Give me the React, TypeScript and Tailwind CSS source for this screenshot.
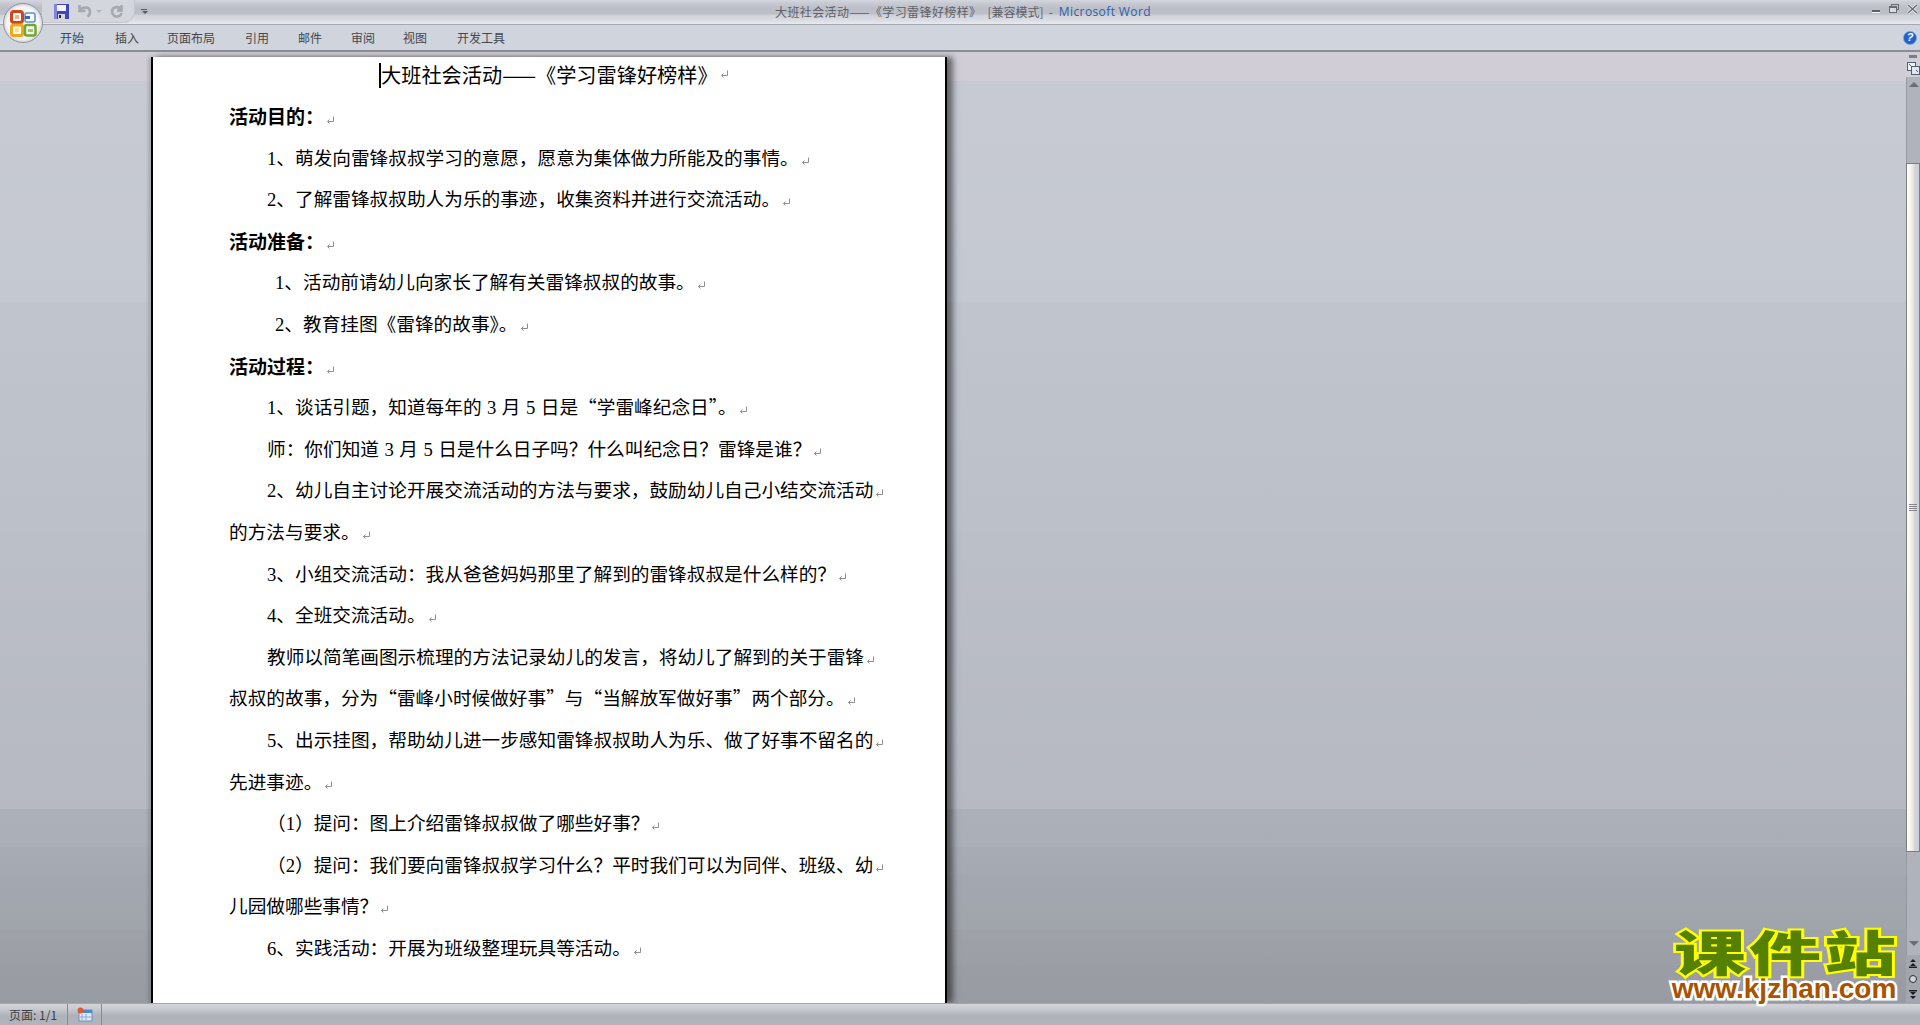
import React from "react";

const tabs = [
  { label: "开始", width: "w-[55px]" },
  { label: "插入", width: "w-[52px]" },
  { label: "页面布局", width: "w-[78px]" },
  { label: "引用", width: "w-[53px]" },
  { label: "邮件", width: "w-[53px]" },
  { label: "审阅", width: "w-[52px]" },
  { label: "视图", width: "w-[54px]" },
  { label: "开发工具", width: "w-[60px]" },
];

// h = 小标题, i = 首行缩进, j = 多缩进一点, c = 续行
const lines: [string, string][] = [
  ["h", "活动目的："],
  ["i", "1、萌发向雷锋叔叔学习的意愿，愿意为集体做力所能及的事情。"],
  ["i", "2、了解雷锋叔叔助人为乐的事迹，收集资料并进行交流活动。"],
  ["h", "活动准备："],
  ["j", "1、活动前请幼儿向家长了解有关雷锋叔叔的故事。"],
  ["j", "2、教育挂图《雷锋的故事》。"],
  ["h", "活动过程："],
  ["i", "1、谈话引题，知道每年的 3 月 5 日是“学雷峰纪念日”。"],
  ["i", "师：你们知道 3 月 5 日是什么日子吗？什么叫纪念日？雷锋是谁？"],
  ["i", "2、幼儿自主讨论开展交流活动的方法与要求，鼓励幼儿自己小结交流活动"],
  ["c", "的方法与要求。"],
  ["i", "3、小组交流活动：我从爸爸妈妈那里了解到的雷锋叔叔是什么样的？"],
  ["i", "4、全班交流活动。"],
  ["i", "教师以简笔画图示梳理的方法记录幼儿的发言，将幼儿了解到的关于雷锋"],
  ["c", "叔叔的故事，分为“雷峰小时候做好事”与“当解放军做好事”两个部分。"],
  ["i", "5、出示挂图，帮助幼儿进一步感知雷锋叔叔助人为乐、做了好事不留名的"],
  ["c", "先进事迹。"],
  ["i", "（1）提问：图上介绍雷锋叔叔做了哪些好事？"],
  ["i", "（2）提问：我们要向雷锋叔叔学习什么？平时我们可以为同伴、班级、幼"],
  ["c", "儿园做哪些事情？"],
  ["i", "6、实践活动：开展为班级整理玩具等活动。"],
];

function ReturnMark() {
  return (
    <svg width="9" height="9" viewBox="0 0 9 9" className="ml-[2px] inline-block align-[-1px]">
      <path d="M7.5 0.5V5.5H1.5M3.5 3.5L1.5 5.5L3.5 7.5" fill="none" stroke="#8f8f8f" strokeWidth="1" />
    </svg>
  );
}

function Line({ kind, text }: { kind: string; text: string }) {
  const indent = kind === "i" ? "pl-[38px]" : kind === "j" ? "pl-[46px]" : "";
  const type = kind === "h" ? "text-[19px] font-bold leading-[41.6px]" : "text-[18.67px] leading-[40px]";
  return (
    <p className={`h-[41.6px] whitespace-nowrap text-black [word-spacing:1.3px] ${indent} ${type}`}>
      {text.split(/(\d)/).map((part, i) =>
        /\d/.test(part) ? (
          <span key={i} className="font-['Liberation_Serif',serif]">
            {part}
          </span>
        ) : (
          part
        ),
      )}
      <ReturnMark />
    </p>
  );
}

function OfficeButton() {
  return (
    <div className="absolute left-[3px] top-[3px] z-10 flex h-[40px] w-[40px] items-center justify-center rounded-full border border-[#8f939b] bg-[radial-gradient(circle,#ffffff_0,#f6f6f4_58%,#d4d6db_72%,#a9adb5_100%)]">
      <svg width="27" height="27" viewBox="0 0 27 27">
        <rect x="1.5" y="1.5" width="11" height="11" rx="2.5" fill="none" stroke="#d0431c" strokeWidth="3" />
        <rect x="5" y="5" width="4" height="4" fill="#f3b080" />
        <rect x="15" y="3" width="10" height="9" rx="1.5" fill="none" stroke="#5b93d0" strokeWidth="1.6" />
        <rect x="15" y="6" width="5" height="3" fill="#2f6bb0" />
        <rect x="1.5" y="15" width="11" height="10.5" rx="2" fill="none" stroke="#f0a818" strokeWidth="3" />
        <rect x="5" y="18" width="4" height="4" fill="#fbe08a" />
        <rect x="15" y="15" width="10.5" height="10.5" rx="2" fill="none" stroke="#6fa82c" strokeWidth="2.5" />
        <rect x="18" y="19" width="5" height="3" fill="#9cc860" />
      </svg>
    </div>
  );
}

function QuickAccess() {
  return (
    <div className="flex h-[23px] w-[93px] items-center rounded-br-[12px] border-b border-r border-[#c4c7ce] bg-[#d3d6dd] pl-[12px]">
      <svg width="15" height="15" viewBox="0 0 15 15">
        <rect width="15" height="15" fill="#3f46b8" />
        <rect x="0" y="0" width="3" height="15" fill="#7f86e0" />
        <rect x="3" y="1" width="9" height="6" fill="#f4f4f8" />
        <rect x="4" y="10" width="7" height="5" fill="#d8d8dc" />
        <rect x="5" y="11" width="2" height="3" fill="#22253a" />
      </svg>
      <svg width="16" height="16" viewBox="0 0 16 16" className="ml-[8px]">
        <path d="M2.5 2V8H8.5M2.5 8C5 3.5 12.5 3 13 8.5C13.2 11 12 12.5 10.5 13.5" fill="none" stroke="#a5a9b1" strokeWidth="2.6" />
      </svg>
      <span className="ml-[3px] h-0 w-0 border-x-[3px] border-t-[3px] border-x-transparent border-t-[#b0b3ba]" />
      <svg width="16" height="16" viewBox="0 0 16 16" className="ml-[7px]">
        <path d="M12.5 2V7.5H8M12.5 7C9.5 2.5 3 3.5 3 8.5C3 12 6 14 8.5 13.5C10.5 13.2 12 12 12.5 10" fill="none" stroke="#a5a9b1" strokeWidth="2.6" />
      </svg>
    </div>
  );
}

function WindowControls() {
  return (
    <div className="flex items-start pt-[4px]">
      <svg width="8" height="4" viewBox="0 0 8 4" className="mt-[6px]">
        <rect width="8" height="2" fill="#5f6168" />
        <rect y="2" width="8" height="1" fill="#f4f5f8" />
      </svg>
      <svg width="10" height="9" viewBox="0 0 10 9" className="ml-[9px]">
        <rect x="2.5" y="0.5" width="7" height="5" fill="none" stroke="#696b72" />
        <rect x="0.5" y="2.5" width="7" height="6" fill="#d8dae0" stroke="#696b72" />
        <rect x="1" y="3" width="6" height="1" fill="#696b72" />
      </svg>
      <svg width="11" height="10" viewBox="0 0 11 10" className="ml-[8px] mr-[2px]">
        <path d="M1 1L10 9M10 1L1 9" fill="none" stroke="#f2f3f6" strokeWidth="3" />
        <path d="M1 1L10 9M10 1L1 9" fill="none" stroke="#6b6d74" strokeWidth="1.6" />
      </svg>
    </div>
  );
}

function HelpIcon() {
  return (
    <div className="flex h-[14px] w-[14px] items-center justify-center rounded-full border border-[#6f9fe8] bg-[radial-gradient(circle,#2f6fe0_0,#174fb8_100%)] font-['Liberation_Sans',sans-serif] text-[11px] font-bold italic leading-none text-white">
      ?
    </div>
  );
}

function ScrollBar() {
  return (
    <div className="flex w-[14px] shrink-0 flex-col items-center bg-[#b0b3bb]">
      <div className="flex h-[8px] w-full items-center justify-center bg-[#d0cdd6]">
        <div className="h-[3px] w-[8px] bg-[#7c7e85]" />
      </div>
      <div className="flex h-[17px] w-full items-center justify-center bg-[#cfd1d8]">
        <svg width="13" height="13" viewBox="0 0 13 13">
          <rect x="0.5" y="0.5" width="8" height="8" fill="#f4f5f8" stroke="#4f5f78" />
          <rect x="4.5" y="4.5" width="8" height="8" fill="#e4e6ec" stroke="#4f5f78" />
          <path d="M2 2L4 4M9 8L11 10" stroke="#4f5f78" />
        </svg>
      </div>
      <div className="flex h-[86px] w-full justify-center border-l border-[#9599a1] pt-[5px]">
        <div className="h-0 w-0 border-x-[5px] border-b-[5px] border-x-transparent border-b-[#6a6d78]" />
      </div>
      <div className="flex h-[689px] w-full flex-col items-center justify-center border border-[#7b7d83] bg-[linear-gradient(90deg,#ffffff_0,#f6f3e6_30%,#e8e8e6_50%,#d0d3db_65%,#cdd0d9_100%)]">
        <div className="flex w-[8px] flex-col gap-[1px]">
          <div className="h-[1px] bg-[#85878c]" />
          <div className="h-[1px] bg-[#85878c]" />
          <div className="h-[1px] bg-[#85878c]" />
          <div className="h-[1px] bg-[#85878c]" />
        </div>
      </div>
      <div className="flex h-[103px] w-full items-end justify-center border-l border-[#9599a1] pb-[9px]">
        <div className="h-0 w-0 border-x-[5px] border-t-[5px] border-x-transparent border-t-[#6a6d78]" />
      </div>
      <div className="flex h-[48px] w-full flex-col items-center justify-around bg-[#a3a6ae] py-[1px]">
        <svg width="8" height="9" viewBox="0 0 8 9">
          <path d="M4 0L7 3H1ZM4 4L7 7H1Z" fill="#1e1e22" />
          <rect y="7.5" width="8" height="1.5" fill="#1e1e22" />
        </svg>
        <div className="h-[8px] w-[8px] rounded-full border border-[#2f3036] bg-[#d4d5d9]" />
        <svg width="8" height="9" viewBox="0 0 8 9">
          <rect width="8" height="1.5" fill="#1e1e22" />
          <path d="M4 5L7 2H1ZM4 9L7 6H1Z" fill="#1e1e22" />
        </svg>
      </div>
    </div>
  );
}

function Watermark() {
  return (
    <div className="absolute bottom-[2px] right-[22px] flex w-[228px] flex-col items-center">
      <div className="ml-[4px] h-[48px] origin-left scale-x-150 self-start whitespace-nowrap font-['Noto_Sans_CJK_SC',sans-serif] text-[48px] font-black leading-[44px] tracking-[2px] text-[#558000] [-webkit-text-stroke:4px_#ffff00] [paint-order:stroke_fill]">
        课件站
      </div>
      <div className="mt-[1px] h-[24px] whitespace-nowrap font-['Liberation_Sans',sans-serif] text-[28px] font-bold leading-[24px] text-[#a85300] [-webkit-text-stroke:5px_#ffffff] [paint-order:stroke_fill]">
        www.kjzhan.com
      </div>
    </div>
  );
}

export default function App() {
  return (
    <div className="flex h-screen w-full flex-col overflow-hidden font-['Noto_Sans_CJK_SC',sans-serif]">
      <OfficeButton />

      <header className="flex h-[25px] shrink-0 border-b border-[#a6a9b0] bg-[linear-gradient(180deg,#d3d6dd_0,#c8cbd3_3px,#bcbfc8_8px,#bcbfc8_14px,#ced1d8_15px,#dadce3_20px,#e8eaf0_24px)]">
        <div className="flex w-[775px] shrink-0 items-start pl-[42px]">
          <QuickAccess />
          <div className="ml-[6px] mt-[9px] flex flex-col gap-[1px]">
            <div className="h-[1px] w-[6px] bg-[#55575e]" />
            <div className="ml-[0.5px] h-0 w-0 border-x-[3px] border-t-[3px] border-x-transparent border-t-[#55575e]" />
          </div>
        </div>
        <div className="flex whitespace-nowrap text-[12px] leading-[24px] text-[#5f6167]">
          <span className="tracking-[0.4px]">大班社会活动——《学习雷锋好榜样》</span>
          <span className="ml-[6px]">[兼容模式]</span>
          <span className="ml-[5px]">-</span>
          <span className="ml-[6px] font-['Open_Sans',sans-serif] tracking-[0.4px] text-[#2f5fa8]">Microsoft Word</span>
        </div>
        <div className="flex flex-1 justify-end">
          <WindowControls />
        </div>
      </header>

      <nav className="flex h-[27px] shrink-0 items-center justify-between border-b-2 border-[#8b8d92] bg-[#d0d4dc] pl-[60px] pr-[3px]">
        <div className="flex text-[12px] text-[#45474d]">
          {tabs.map((tab) => (
            <span key={tab.label} className={tab.width}>
              {tab.label}
            </span>
          ))}
        </div>
        <HelpIcon />
      </nav>

      <div className="relative flex min-h-0 flex-1">
        <main className="min-w-0 flex-1 overflow-hidden bg-[linear-gradient(180deg,#d0cdd6_0,#d0cdd6_29px,#c7cad2_29px,#c4c8d0_250px,#c0c4cc_250px,#bcc0c9_481px,#bbbfc8_481px,#b6b9c2_757px,#acb0b8_757px,#aaaeb6_795px,#a7abb3_795px,#a5a9b1_823px,#a3a7af_823px,#a0a4ab_877px,#9ea2a9_877px,#9b9ea5_914px,#9a9da4_914px,#989ba2_951px)] pt-[5px]">
          <article className="ml-[151px] h-full w-[796px] border-x-2 border-black bg-white pl-[76px] shadow-[6px_0_6px_rgba(0,0,0,0.5),-3px_0_3px_rgba(0,0,0,0.14)]">
            <h1 className="relative flex h-[35px] items-center whitespace-nowrap pl-[152px] text-[20.2px] leading-[35px] text-black">
              <span className="absolute ml-[-2px] mt-[1px] h-[25px] w-[2px] bg-black" />
              大班社会活动——《学习雷锋好榜样》
              <ReturnMark />
            </h1>
            <div className="pt-[3px]">
              {lines.map(([kind, text], i) => (
                <Line key={i} kind={kind} text={text} />
              ))}
            </div>
          </article>
        </main>
        <ScrollBar />
        <Watermark />
      </div>

      <footer className="flex h-[22px] shrink-0 items-stretch border-t border-[#a3a6ad] bg-[linear-gradient(180deg,#d2d4da_0,#c8cad1_5px,#b9bcc3_9px,#aeb1b8_12px,#b2b5bc_22px)] text-[12px] text-[#3c3d42]">
        <div className="flex w-[68px] items-center border-r border-[#888a90] pl-[9px]">页面: 1/1</div>
        <div className="flex w-[34px] items-center justify-center border-r border-[#888a90]">
          <svg width="16" height="16" viewBox="0 0 16 16">
            <rect x="2" y="3" width="13" height="11" fill="#dfe8f4" stroke="#6d8fbd" />
            <rect x="2" y="3" width="13" height="3" fill="#4f86c8" />
            <path d="M5 7V13M9 7V13M3 10H14" stroke="#8aa8cf" />
            <circle cx="3.5" cy="3.5" r="3" fill="#dc5a38" />
          </svg>
        </div>
      </footer>
    </div>
  );
}
